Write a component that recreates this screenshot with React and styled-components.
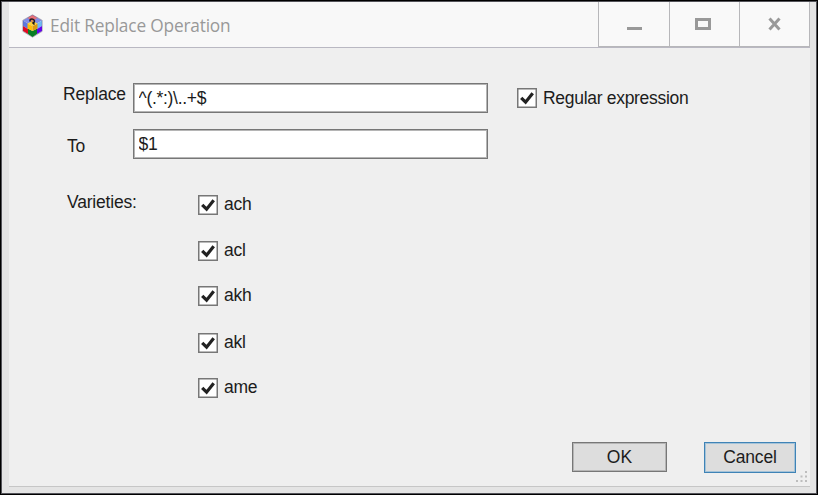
import React from "react";
import styled, { createGlobalStyle } from "styled-components";

const GlobalStyle = createGlobalStyle`
  * { box-sizing: border-box; }
  body { margin: 0; background: #000; overflow: hidden; }
`;

const Frame = styled.div`
  width: 818px;
  height: 495px;
  padding: 1px;
  background: #000;
  font: 17.5px/22px "Liberation Sans", Arial, sans-serif;
  color: #1c1c1c;
`;

const WindowShell = styled.div`
  display: flex;
  flex-direction: column;
  height: 493px;
  padding: 0 6px 6px 7px;
  background: #e4e4e4;
  border: 1px solid #54545a;
`;

const TitleBar = styled.header`
  display: flex;
  height: 46px;
  flex: none;
  background: #f8f8f8;
  border-bottom: 1px solid #b9b8c2;
`;

const Caption = styled.div`
  display: flex;
  align-items: center;
  flex: 1;
  padding: 3px 0 0 13px;
  gap: 7px;
`;

const Title = styled.h1`
  margin: 0;
  font: 400 17.3px/24px "Open Sans", "Noto Sans", sans-serif;
  letter-spacing: -0.18px;
  color: #999;
  white-space: nowrap;
`;

const WindowButton = styled.button`
  display: flex;
  width: ${(p) => p.$width}px;
  height: 45px;
  padding: 0;
  border: 0 solid #b7b7ba;
  border-left-width: 1px;
  border-right-width: ${(p) => (p.$last ? 1 : 0)}px;
  border-bottom-width: 1px;
  background: #f9f9f9;
`;

const Body = styled.main`
  flex: 1;
  display: flex;
  flex-direction: column;
  padding-top: 35px;
  background: #efefef;
  border-bottom: 1px solid #c6c6c6;
`;

const Row = styled.div`
  display: flex;
  height: ${(p) => p.$height}px;
  padding-left: ${(p) => p.$indent}px;
`;

const Label = styled.span`
  width: ${(p) => p.$width}px;
  flex: none;
  padding-top: ${(p) => p.$drop}px;
  letter-spacing: -0.2px;
  white-space: nowrap;
`;

const Input = styled.input`
  width: 355px;
  height: 30px;
  padding: 0 4px 0 4.5px;
  border: 1px solid #777;
  box-shadow: inset 0 0 0 1px #b5b5b5;
  border-radius: 0;
  background: #fff;
  color: #1c1c1c;
  font: inherit;
  letter-spacing: -0.3px;
`;

const CheckLabel = styled.label`
  display: flex;
  gap: 6px;
  height: 20px;
  margin-left: ${(p) => p.$left || 0}px;
  margin-top: ${(p) => p.$top || 0}px;
  line-height: 20px;
  letter-spacing: -0.3px;
  white-space: nowrap;
`;

const Mark = styled.svg`
  flex: none;
  width: 20px;
  height: 20px;
`;

const CheckText = styled.span`
  margin-top: ${(p) => p.$shift}px;
`;

const Varieties = styled.section`
  display: flex;
  padding: 32px 0 0 58px;
`;

const VarietyList = styled.div`
  display: grid;
  grid-template-rows: 46px 45px 47px 45px 20px;
  padding-top: 4px;
`;

const Footer = styled.footer`
  display: flex;
  align-items: flex-start;
  margin-top: auto;
  height: 44px;
  padding-left: 563px;
`;

const DialogButton = styled.button`
  width: ${(p) => p.$width}px;
  height: ${(p) => p.$height}px;
  margin-right: ${(p) => p.$gap}px;
  padding: 0 0 1px;
  border: 1px solid ${(p) => (p.$focus ? "#3f83b6" : "#777")};
  box-shadow: inset 0 0 0 1px ${(p) => (p.$focus ? "#a5c3d8" : "#b5b5b5")};
  border-radius: 0;
  background: #ddd;
  color: #1c1c1c;
  font: inherit;
  letter-spacing: ${(p) => p.$tracking}px;
`;

const Grip = styled.svg`
  width: 14px;
  height: 14px;
  align-self: flex-end;
  margin-bottom: 2px;
`;

function CubeIcon() {
  return (
    <svg width="21" height="24" viewBox="0 0 21 24">
      <path d="M10.5 1 20 6.5 10.5 12 1 6.5Z" fill="#7f8ce8" />
      <path d="M10.5 1 15.5 4 10.5 7 5.5 4Z" fill="#e87078" />
      <path d="M1 6.5 6 9.5V15L1 12Z" fill="#5d78df" />
      <path d="M20 6.5 15 9.5V15L20 12Z" fill="#70b9f5" />
      <path d="M1 12 6 15V20L1 17Z" fill="#e20a20" />
      <path d="M20 12 15 15V20L20 17Z" fill="#6500ef" />
      <path d="M6 14.5 10.5 17 15 14.5V20L10.5 23 6 20Z" fill="#087d24" />
      <path d="M5.5 9.5 10.5 12V17L5.5 14.5Z" fill="#ffbd08" />
      <path d="M15.5 9.5 10.5 12V17L15.5 14.5Z" fill="#dc9a12" />
      <path d="M5.5 9.5 10.5 7 15.5 9.5 10.5 12Z" fill="#ffd43b" />
      <path d="M10.5 .8 20.2 6.3V17.3L10.5 23.2 .8 17.3V6.3Z" fill="none" stroke="#55506b" strokeOpacity=".55" strokeWidth=".8" />
      <path d="M8 7.5V6.5Q8 5 10 5T12.5 7Q12.500 8.500 11 9L12.500 10.500" fill="none" stroke="#20171b" strokeWidth="1.5" />
      <circle cx="10" cy="7" r="1.1" fill="#df8738" />
    </svg>
  );
}

function Check({ text, shift = -1, ...rest }) {
  return (
    <CheckLabel {...rest}>
      <Mark viewBox="0 0 20 20">
        <rect x=".75" y=".75" width="18.5" height="18.5" fill="#fff" stroke="#777" strokeWidth="1.5" />
        <path d="M4.2 9.8 8.6 14.2 15.7 5.2" fill="none" stroke="#222" strokeWidth="3.2" />
      </Mark>
      <CheckText $shift={shift}>{text}</CheckText>
    </CheckLabel>
  );
}

const gripDots = [[10, 1], [5.5, 5.5], [10, 5.5], [1, 10], [5.5, 10], [10, 10]];

export default function App() {
  return (
    <>
      <GlobalStyle />
      <Frame>
        <WindowShell>
          <TitleBar>
            <Caption>
              <CubeIcon />
              <Title>Edit Replace Operation</Title>
            </Caption>
            <WindowButton $width={71} aria-label="Minimize">
              <svg width="70" height="44"><path d="M28 26.5h15" stroke="#999" strokeWidth="3" /></svg>
            </WindowButton>
            <WindowButton $width={70} aria-label="Maximize">
              <svg width="69" height="44"><path d="M26.500 17.500h13v9h-13z" fill="none" stroke="#999" strokeWidth="3" /></svg>
            </WindowButton>
            <WindowButton $width={71} $last aria-label="Close">
              <svg width="69" height="44"><path d="M29.500 16.500 39.500 27.500M39.500 16.500 29.500 27.500" stroke="#999" strokeWidth="3" /></svg>
            </WindowButton>
          </TitleBar>
          <Body>
            <Row $height={46} $indent={54}>
              <Label $width={70} $drop={0}>Replace</Label>
              <Input aria-label="Replace" defaultValue="^(.*:)\..+$" />
              <Check text="Regular expression" $left={29} $top={5} shift={0} />
            </Row>
            <Row $height={30} $indent={58}>
              <Label $width={66} $drop={6}>To</Label>
              <Input aria-label="To" defaultValue="$1" />
            </Row>
            <Varieties>
              <Label $width={131} $drop={0}>Varieties:</Label>
              <VarietyList>
                {["ach", "acl", "akh", "akl", "ame"].map((v) => <Check key={v} text={v} />)}
              </VarietyList>
            </Varieties>
            <Footer>
              <DialogButton $width={95} $height={30} $gap={37} $tracking={0}>OK</DialogButton>
              <DialogButton $width={92} $height={31} $gap={-1} $focus $tracking={-0.2}>Cancel</DialogButton>
              <Grip>
                {gripDots.map(([x, y]) => <rect key={`${x}-${y}`} x={x} y={y} width="2" height="2" fill="#bdbdbd" />)}
              </Grip>
            </Footer>
          </Body>
        </WindowShell>
      </Frame>
    </>
  );
}
